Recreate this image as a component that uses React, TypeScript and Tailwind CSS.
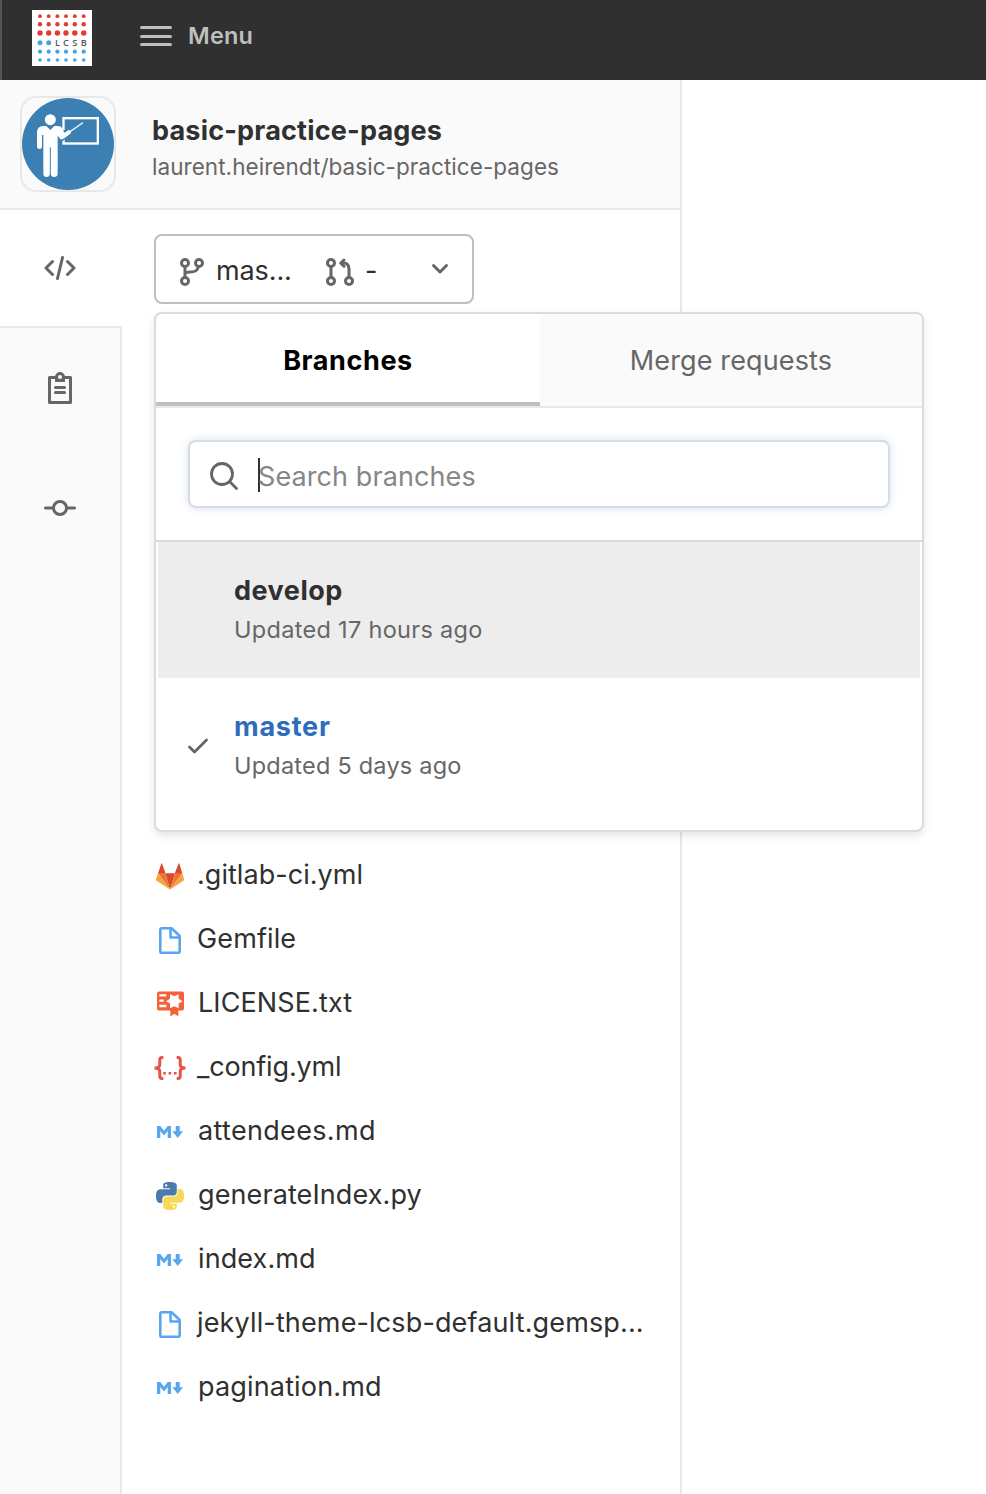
import React from "react";

type IconProps = { className?: string };

const LOGO_X = [8, 16.7, 25.4, 34, 42.8, 51.7];
const LOGO_ROWS = [
  { y: 6.2, r: 1.9, n: 6, fill: "#e03c31" },
  { y: 14.3, r: 2.2, n: 6, fill: "#e03c31" },
  { y: 23, r: 2.7, n: 6, fill: "#e03c31" },
  { y: 32.8, r: 2.5, n: 2, fill: "#41a5e1" },
  { y: 41.7, r: 2.1, n: 6, fill: "#41a5e1" },
  { y: 50, r: 1.8, n: 6, fill: "#41a5e1" },
];

function LcsbLogo() {
  return (
    <svg viewBox="0 0 60 56" className="h-14 w-15 bg-white">
      {LOGO_ROWS.map((row) =>
        LOGO_X.slice(0, row.n).map((x) => <circle key={`${row.y}-${x}`} cx={x} cy={row.y} r={row.r} fill={row.fill} />),
      )}
      {["L", "C", "S", "B"].map((c, i) => (
        <text key={c} x={LOGO_X[i + 2]} y={36} textAnchor="middle" fontSize="9.2" fontWeight="600" fill="#555" fontFamily="Open Sans, sans-serif">
          {c}
        </text>
      ))}
    </svg>
  );
}

function ProjectAvatar() {
  return (
    <svg viewBox="66 54 276 276" className="size-23">
      <circle cx="204" cy="192" r="138" fill="#3c80b3" />
      <rect x="190.500" y="114.500" width="103" height="76" fill="none" stroke="#fff" strokeWidth="7" />
      <path d="M180 150h18v26l-18 12z" fill="#3c80b3" />
      <g fill="#fff">
        <path d="M130 138h9l12 12 12-12h10q11 0 15 9l5 11 12-7q6-2 8 3 1 5-3 8l-17 13q-8 5-12 2l-8-10v115q-1 9-10.500 9t-10-9v-80h-3v80q-1 9-10 9t-9.500-9V165h-4v35q-1 7-7.500 7t-7.500-7v-43q0-18 19-19z" />
        <circle cx="151" cy="119" r="16.500" />
      </g>
      <path d="M207 157l42-29" stroke="#fff" strokeOpacity="0.85" strokeWidth="4" />
    </svg>
  );
}

function CodeIcon() {
  return (
    <svg viewBox="0 0 32 26" className="h-[26px] w-8" fill="none" stroke="#666" strokeWidth="3" strokeLinecap="round" strokeLinejoin="round">
      <path d="M8.500 6.500 2 13l6.500 6.500M23.500 6.500 30 13l-6.500 6.500M18.500 2.500l-5 21" />
    </svg>
  );
}

function ClipboardIcon() {
  return (
    <svg viewBox="0 0 24 32" className="h-8 w-6" fill="none" stroke="#666" strokeWidth="3">
      <path d="M8 5.500H1.500v25h21v-25H16" strokeLinejoin="round" />
      <path d="M7 3.900h1.300a4 4 0 0 1 7.400 0H17V10H7z" fill="#666" stroke="none" />
      <circle cx="12" cy="5" r="3.500" strokeWidth="3" fill="#fafafa" />
      <path d="M7.500 15.500h9M7.500 20.500h9" strokeLinecap="round" />
    </svg>
  );
}

function CommitIcon() {
  return (
    <svg viewBox="0 0 32 16" className="h-4 w-8" fill="none" stroke="#666" strokeWidth="3" strokeLinecap="round">
      <circle cx="16" cy="8" r="6.500" />
      <path d="M1.500 8h7M23.500 8h7" />
    </svg>
  );
}

function BranchIcon() {
  return (
    <svg viewBox="0 0 24 28" className="h-7 w-6" fill="none" stroke="#666" strokeWidth="3">
      <circle cx="5" cy="5" r="3.500" />
      <circle cx="19" cy="5" r="3.500" />
      <circle cx="5" cy="23" r="3.500" />
      <path d="M5 8.500v11M5 15.500c1.500-1.500 3-1.500 5-1.500 5 0 7.500-1 8.500-5.500" />
    </svg>
  );
}

function MergeRequestIcon() {
  return (
    <svg viewBox="0 0 29 28" className="h-7 w-[29px]" fill="none" stroke="#666" strokeWidth="3">
      <circle cx="5" cy="5" r="3.500" />
      <circle cx="5" cy="23" r="3.500" />
      <circle cx="23" cy="23" r="3.500" />
      <path d="M5 8.500v11M23 19.500v-8q0-6.500-5.500-6.500H15" />
      <path d="M18 2 14.800 5.100 18 8.300" strokeLinecap="round" strokeLinejoin="round" />
    </svg>
  );
}

function ChevronIcon() {
  return (
    <svg viewBox="0 0 18 12" className="h-3 w-[18px]" fill="none" stroke="#666" strokeWidth="3" strokeLinecap="round" strokeLinejoin="round">
      <path d="M2.500 2.500 9 9l6.500-6.500" />
    </svg>
  );
}

function SearchIcon() {
  return (
    <svg viewBox="0 0 28 28" className="size-7" fill="none" stroke="#666" strokeWidth="2.800" strokeLinecap="round">
      <circle cx="12" cy="12" r="10.500" />
      <path d="m19.800 19.800 6.700 6.700" />
    </svg>
  );
}

function CheckIcon() {
  return (
    <svg viewBox="0 0 20 16" className="h-4 w-5" fill="none" stroke="#666" strokeWidth="2.800" strokeLinecap="round" strokeLinejoin="round">
      <path d="m1.500 9 5 5L18.500 2" />
    </svg>
  );
}

function GitlabIcon({ className }: IconProps) {
  return (
    <svg viewBox="18 38 84 80" className={className}>
      <path d="M60 117 46 68h29z" fill="#d8492f" />
      <path d="M60 117 24 68h22zM60 117 97 68H75z" fill="#f0742f" />
      <path d="M60 117 24 68l-6 18q-1 3 2 5zM60 117 97 68l5 18q1 3-2 5z" fill="#f6a341" />
      <path d="M24 69l10-30q1-2 2 0l11 30zM97 69 88 39q-1-2-2 0L74 69z" fill="#d8492f" />
    </svg>
  );
}

function FileIcon({ className }: IconProps) {
  return (
    <svg viewBox="0 0 22 27" className={className} fill="none" stroke="#5aa5f0" strokeWidth="2.600" strokeLinejoin="round">
      <path d="M12.500 1.300H2.300Q1.300 1.300 1.300 2.500v22q0 1.200 1 1.200h17.400q1 0 1-1.200V9z" />
      <path d="M11.500 1.300V10.500h9" />
    </svg>
  );
}

function LicenseIcon({ className }: IconProps) {
  return (
    <svg viewBox="20 425 81 77" className={className}>
      <path d="M26 426h69q6 0 6 6v45q0 6-6 6H84v18l-12-8-12 8v-18H26q-6 0-6-6v-45q0-6 6-6z" fill="#f26137" />
      <path d="M27 434h21v7H27zM27 450h13v7H27zM27 466h21v7H27z" fill="#fff" />
      <path d="M97 455 85 462 85 476 72 470 59 476 59 462 47 455 59 448 59 434 72 440 85 434 85 448z" fill="#fff" />
    </svg>
  );
}

function JsonIcon({ className }: IconProps) {
  return (
    <svg viewBox="0 0 32 26" className={className} fill="none" stroke="#e5534b" strokeWidth="3">
      <path d="M9.300 2.500H8Q5.800 2.500 5.800 5v4.500Q5.800 13 .5 13q5.300 0 5.300 3.500V21q0 2.500 2.200 2.500h1.300M22.700 2.500H24q2.200 0 2.200 2.500v4.500q0 3.500 5.300 3.500-5.300 0-5.300 3.500V21q0 2.500-2.200 2.500h-1.300" />
      <path d="M9.200 18.300h2.600M14.600 18.300h2.600M20 18.300h2.600" strokeWidth="2.600" />
    </svg>
  );
}

function MarkdownIcon({ className }: IconProps) {
  return (
    <svg viewBox="0 0 26 12" className={className} fill="#5aa5f0">
      <path d="M0 12V0h3.300L7 4.700 10.700 0H14v12h-3.300V5L7 9.500 3.300 5v7zM18.700 0h4v5.200H26L20.700 12l-5.300-6.800h3.300z" />
    </svg>
  );
}

function PythonIcon({ className }: IconProps) {
  return (
    <svg viewBox="0 0 24 24" className={className}>
      <path
        fill="#4a7bab"
        d="M14.25.18l.9.2.73.26.59.3.45.32.34.34.25.34.16.33.1.3.04.26.02.2-.01.13V8.500l-.05.63-.13.55-.21.46-.26.38-.3.31-.33.25-.35.19-.35.14-.33.1-.3.07-.26.04-.21.02H8.770l-.69.05-.59.14-.5.22-.41.27-.33.32-.27.35-.2.36-.15.37-.1.35-.07.32-.04.27-.02.21v3.060H3.170l-.21-.03-.28-.07-.32-.12-.35-.18-.36-.26-.36-.36-.35-.46-.32-.59-.28-.73-.21-.88-.14-1.050-.05-1.230.06-1.220.16-1.040.24-.87.32-.71.36-.57.4-.44.42-.33.42-.24.4-.16.36-.1.32-.05.24-.01h.16l.06.01h8.160v-.83H6.180l-.01-2.750-.02-.37.05-.34.11-.31.17-.28.25-.26.31-.23.38-.2.44-.18.51-.15.58-.12.64-.1.71-.06.77-.04.84-.02 1.270.05zm-6.300 1.980l-.23.33-.08.41.08.41.23.34.33.22.41.09.41-.09.33-.22.23-.34.08-.41-.08-.41-.23-.33-.33-.22-.41-.09-.41.09z"
      />
      <path
        fill="#fad857"
        d="M21.040 6.110l.28.06.32.12.35.18.36.27.36.35.35.47.32.59.28.73.21.88.14 1.040.05 1.230-.06 1.230-.16 1.040-.24.86-.32.71-.36.57-.4.45-.42.33-.42.24-.4.16-.36.09-.32.05-.24.02-.16-.01h-8.220v.82h5.840l.01 2.760.02.36-.05.34-.11.31-.17.29-.25.25-.31.24-.38.2-.44.17-.51.15-.58.13-.64.09-.71.07-.77.04-.84.01-1.270-.04-1.070-.14-.9-.2-.73-.25-.59-.3-.45-.33-.34-.34-.25-.34-.16-.33-.1-.3-.04-.25-.02-.2.01-.13v-5.340l.05-.64.13-.54.21-.46.26-.38.3-.32.33-.24.35-.2.35-.14.33-.1.3-.06.26-.04.21-.02.13-.01h5.840l.69-.05.59-.14.5-.21.41-.28.33-.32.27-.35.2-.36.15-.36.1-.35.07-.32.04-.28.02-.21V6.070h2.090zm-6.470 14.250l-.23.33-.08.41.08.41.23.33.33.23.41.08.41-.08.33-.23.23-.33.08-.41-.08-.41-.23-.33-.33-.23-.41-.08-.41.08z"
      />
    </svg>
  );
}

const FILES = [
  { name: ".gitlab-ci.yml", icon: <GitlabIcon className="h-[27px] w-7" />, text: "tracking-[0.04px]" },
  { name: "Gemfile", icon: <FileIcon className="h-[27px] w-[22px]" />, text: "tracking-[0.12px]" },
  { name: "LICENSE.txt", icon: <LicenseIcon className="h-[26px] w-[27px]" />, text: "pl-px tracking-[0.1px]" },
  { name: "_config.yml", icon: <JsonIcon className="h-[26px] w-8" />, text: "tracking-[-0.15px]" },
  { name: "attendees.md", icon: <MarkdownIcon className="mr-px h-3 w-[26px]" />, text: "pl-px tracking-[0.33px]" },
  { name: "generateIndex.py", icon: <PythonIcon className="size-7" />, text: "pl-px tracking-[0.1px]" },
  { name: "index.md", icon: <MarkdownIcon className="mr-px h-3 w-[26px]" />, text: "pl-px tracking-[0.1px]" },
  { name: "jekyll-theme-lcsb-default.gemsp...", icon: <FileIcon className="h-[27px] w-[22px]" />, text: "tracking-[0.14px]" },
  { name: "pagination.md", icon: <MarkdownIcon className="mr-px h-3 w-[26px]" />, text: "pl-px tracking-[0.16px]" },
];

function BranchDropdown() {
  return (
    <div className="absolute top-[102px] left-8 z-10 flex h-[520px] w-[770px] flex-col overflow-hidden rounded-lg border-2 border-[#dbdbdb] bg-white shadow-[0_4px_8px_rgba(0,0,0,0.1)]">
      <div className="flex h-[94px] shrink-0 border-b-2 border-[#e8e8e8]">
        <div className="-mb-0.5 flex h-[92px] w-96 items-center justify-center border-b-4 border-[#bfbfbf] pt-1.5 text-[27px] font-bold tracking-[0.6px] text-black">Branches</div>
        <div className="flex flex-1 items-center justify-center bg-[#fafafa] pt-0.5 text-[27px] tracking-[0.14px] text-[#666]">Merge requests</div>
      </div>
      <div className="shrink-0 border-b-2 border-[#dbdbdb] px-8 py-8">
        <div className="flex h-[68px] items-center rounded-lg border-2 border-[#dbdbdb] bg-white pt-1 pl-5 shadow-[0_0_8px_rgba(66,143,220,0.25)]">
          <SearchIcon />
          <span className="-mt-0.5 ml-5 h-[34px] w-0.5 bg-[#303030]" />
          <span className="-ml-0.5 pt-0.5 text-[27px] tracking-[0.09px] text-[#868686]">Search branches</span>
        </div>
      </div>
      <div className="mx-0.5 h-34 shrink-0 bg-[#ededed] pt-[29px] pl-[76px]">
        <div className="h-[39px] text-[27px] leading-10 font-bold tracking-[0.5px] text-[#303030]">develop</div>
        <div className="h-10 text-[23.5px] leading-10 tracking-[0.31px] text-[#666]">Updated 17 hours ago</div>
      </div>
      <div className="mx-0.5 flex h-34 shrink-0 pt-[29px]">
        <div className="flex w-[76px] items-center pb-[29px] pl-[30px]">
          <CheckIcon />
        </div>
        <div>
          <div className="h-[39px] text-[27px] leading-10 font-bold tracking-[0.75px] text-[#2d6cbe]">master</div>
          <div className="h-10 text-[23.5px] leading-10 tracking-[0.22px] text-[#666]">Updated 5 days ago</div>
        </div>
      </div>
    </div>
  );
}

export default function App() {
  return (
    <div className="flex h-[1494px] w-[986px] flex-col overflow-hidden bg-white font-['Inter',sans-serif] text-[#303030]">
      <header className="flex h-20 shrink-0 items-center border-l-2 border-[#555] bg-[#303030] pl-[30px]">
        <div className="-mt-1">
          <LcsbLogo />
        </div>
        <div className="-mt-2 ml-12 flex w-8 flex-col gap-[5.500px]">
          <span className="h-[3px] rounded-full bg-[#bfbfbf]" />
          <span className="h-[3px] rounded-full bg-[#bfbfbf]" />
          <span className="h-[3px] rounded-full bg-[#bfbfbf]" />
        </div>
        <span className="-mt-2 ml-4 text-[23.5px] font-semibold tracking-[0.2px] text-[#bfbfbf]">Menu</span>
      </header>

      <div className="flex w-[682px] flex-1 flex-col border-r-2 border-[#e8e8e8]">
        <div className="flex h-[130px] shrink-0 items-center border-b-2 border-[#e8e8e8] bg-[#fafafa] pl-5">
          <div className="size-24 overflow-hidden rounded-2xl border-2 border-[#e8e8e8]">
            <ProjectAvatar />
          </div>
          <div className="ml-9 pt-[9px]">
            <div className="h-9 text-[27px] leading-9 font-bold tracking-[0.2px]">basic-practice-pages</div>
            <div className="h-9 text-[22.500px] leading-9 tracking-[0.05px] text-[#666]">laurent.heirendt/basic-practice-pages</div>
          </div>
        </div>

        <div className="flex flex-1">
          <nav className="flex w-[122px] flex-col">
            <div className="flex h-[116px] items-center justify-center pr-0.5">
              <CodeIcon />
            </div>
            <div className="flex flex-1 flex-col items-center border-t-2 border-r-2 border-[#e8e8e8] bg-[#fafafa]">
              <div className="flex h-[120px] items-center">
                <ClipboardIcon />
              </div>
              <div className="flex h-[120px] items-center">
                <CommitIcon />
              </div>
            </div>
          </nav>

          <main className="relative flex-1 pt-6 pl-8">
            <div className="flex h-[70px] w-80 items-center rounded-lg border-2 border-[#bfbfbf] bg-white pl-6">
              <span className="pt-1.5">
                <BranchIcon />
              </span>
              <span className="ml-3 w-[110px] pt-1 text-[27px] tracking-[-0.1px]">mas...</span>
              <span className="pt-1.5">
                <MergeRequestIcon />
              </span>
              <span className="ml-2.5 w-[66px] pt-1 text-[27px]">-</span>
              <ChevronIcon />
            </div>
            <BranchDropdown />
            <ul className="-ml-0.5 pt-[538px]">
              {FILES.map((f) => (
                <li key={f.name} className="flex h-16 items-center text-[27px] whitespace-nowrap">
                  <span className="flex w-9 justify-center pt-1">{f.icon}</span>
                  <span className={`ml-[9px] pt-0.5 ${f.text}`}>{f.name}</span>
                </li>
              ))}
            </ul>
          </main>
        </div>
      </div>
    </div>
  );
}
